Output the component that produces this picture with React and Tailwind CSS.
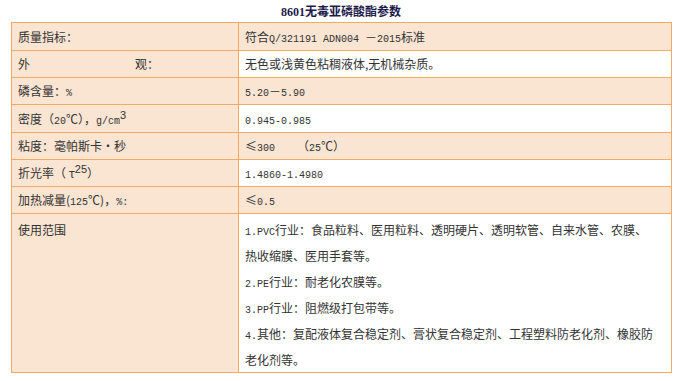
const cjk = "font-['SimSun','Noto_Sans_CJK_SC',sans-serif]";

const L = ({ children }) => (
  <span className="font-['Liberation_Mono',monospace] text-[10px] leading-none">{children}</span>
);

const Sup = ({ children }) => (
  <span className="relative -top-[5px] text-[11px] leading-none font-['Liberation_Sans',sans-serif]">
    {children}
  </span>
);

const rows = [
  {
    label: "质量指标：",
    value: (
      <>
        符合<L>Q/321191 ADN004 </L>－<L>2015</L>标准
      </>
    ),
    h: "h-[28px]",
    shade: true,
  },
  {
    label: (
      <>
        外<span className="ml-[105px]">观：</span>
      </>
    ),
    value: "无色或浅黄色粘稠液体,无机械杂质。",
    h: "h-[27px]",
    shade: false,
  },
  {
    label: (
      <>
        磷含量：<L>%</L>
      </>
    ),
    value: (
      <>
        <L>5.20</L>－<L>5.90</L>
      </>
    ),
    h: "h-[27px]",
    shade: true,
  },
  {
    label: (
      <>
        密度（<L>20</L>℃），<L>g/cm</L>
        <Sup>3</Sup>
      </>
    ),
    value: <L>0.945-0.985</L>,
    h: "h-[28px]",
    shade: false,
  },
  {
    label: "粘度：毫帕斯卡·秒",
    value: (
      <>
        ≤<L>300</L>
        <span className="ml-[22px]">（<L>25</L>℃）</span>
      </>
    ),
    h: "h-[27px]",
    shade: true,
  },
  {
    label: (
      <>
        折光率（ τ<Sup>25</Sup>）
      </>
    ),
    value: <L>1.4860-1.4980</L>,
    h: "h-[27px]",
    shade: false,
  },
  {
    label: (
      <>
        加热减量(<L>125</L>℃)，<L>%:</L>
      </>
    ),
    value: (
      <>
        ≤<L>0.5</L>
      </>
    ),
    h: "h-[27px]",
    shade: true,
  },
];

const usage = [
  <>
    <L>1.PVC</L>行业：食品粒料、医用粒料、透明硬片、透明软管、自来水管、农膜、
  </>,
  <>热收缩膜、医用手套等。</>,
  <>
    <L>2.PE</L>行业：耐老化农膜等。
  </>,
  <>
    <L>3.PP</L>行业：阻燃级打包带等。
  </>,
  <>
    <L>4.</L>其他：复配液体复合稳定剂、膏状复合稳定剂、工程塑料防老化剂、橡胶防
  </>,
  <>老化剂等。</>,
];

const App = () => {
  return (
    <div className={`w-[682px] h-[381px] bg-white ${cjk} text-[12px] text-[#333] overflow-hidden`}>
      <h1 className="h-[22px] pt-[4px] text-center text-[12px] leading-[14px] font-bold text-[#1c1c4c]">
        <span className="font-['Liberation_Serif',serif]">8601</span>无毒亚磷酸酯参数
      </h1>
      <div className="ml-[11px] w-[661px] border border-[#f4a964]">
        {rows.map((r, i) => (
          <div key={i} className={`flex border-b border-[#f4a964] overflow-hidden ${r.h}`}>
            <div className="w-[227px] shrink-0 flex items-center pl-[6px] leading-[16px] bg-[#fae5d2] border-r border-[#f4a964]">
              <span>{r.label}</span>
            </div>
            <div
              className={`flex-1 flex items-center pl-[6px] leading-[16px] ${
                r.shade ? "bg-[#fae5d2]" : "bg-white"
              }`}
            >
              <span>{r.value}</span>
            </div>
          </div>
        ))}
        <div className="flex h-[158px]">
          <div className="w-[227px] shrink-0 pl-[6px] pt-[3px] leading-[26px] bg-[#fae5d2] border-r border-[#f4a964]">
            使用范围
          </div>
          <div className="flex-1 pl-[6px] pt-[3px] bg-white whitespace-nowrap">
            {usage.map((line, i) => (
              <div key={i} className="h-[26px] leading-[26px]">
                {line}
              </div>
            ))}
          </div>
        </div>
      </div>
    </div>
  );
};

export default App;
